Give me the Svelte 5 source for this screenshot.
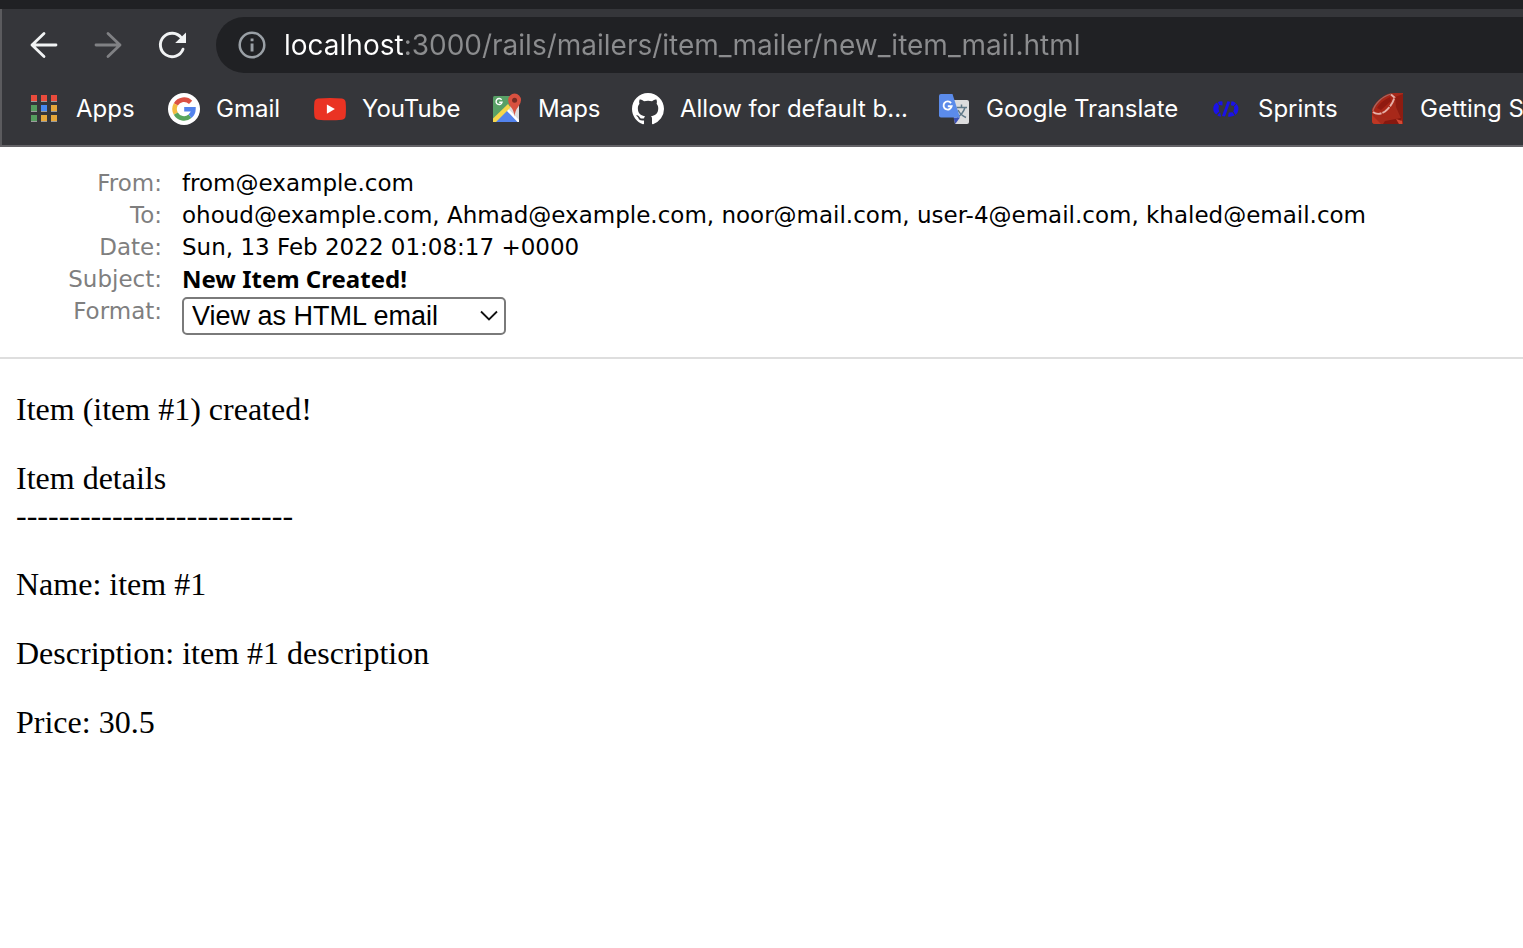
<script>
  const address = 'localhost:3000/rails/mailers/item_mailer/new_item_mail.html';

  const bookmarks = [
    { icon: 'apps', label: 'Apps', width: 140 },
    { icon: 'google', label: 'Gmail', width: 146 },
    { icon: 'youtube', label: 'YouTube', width: 176 },
    { icon: 'maps', label: 'Maps', width: 142 },
    { icon: 'github', label: 'Allow for default b...', width: 306 },
    { icon: 'translate', label: 'Google Translate', width: 272 },
    { icon: 'sprints', label: 'Sprints', width: 162 },
    { icon: 'ruby', label: 'Getting S', width: 160 }
  ];

  const appColors = ['#e94b3c', '#e94b3c', '#e94b3c', '#559d5f', '#4688f1', '#e6a73a', '#559d5f', '#e6a73a', '#e6a73a'];

  const headers = [
    { name: 'From:', value: 'from@example.com' },
    { name: 'To:', value: 'ohoud@example.com, Ahmad@example.com, noor@mail.com, user-4@email.com, khaled@email.com' },
    { name: 'Date:', value: 'Sun, 13 Feb 2022 01:08:17 +0000' },
    { name: 'Subject:', value: 'New Item Created!', strong: true }
  ];
</script>

<div class="chrome">
  <div class="toolbar">
    <button aria-label="Back">
      <svg viewBox="0 0 32 32"><path d="M28 16H4M16 4.500L4 16L16 27.500" fill="none" stroke="#f1f3f4" stroke-width="2.800" stroke-linecap="round" stroke-linejoin="round" /></svg>
    </button>
    <button aria-label="Forward" disabled>
      <svg viewBox="0 0 32 32"><path d="M4 16H28M16 4.500L28 16L16 27.500" fill="none" stroke="#808184" stroke-width="2.800" stroke-linecap="round" stroke-linejoin="round" /></svg>
    </button>
    <button aria-label="Reload">
      <svg viewBox="0 0 32 32"><path d="M27 20.200A11.700 11.700 0 1 1 25.500 9" fill="none" stroke="#f1f3f4" stroke-width="2.900" stroke-linecap="round" /><path d="M30 3.500V14H19.200Z" fill="#f1f3f4" /></svg>
    </button>
    <div class="omnibox">
      <svg viewBox="0 0 28 28" aria-hidden="true"><circle cx="14" cy="14" r="12.300" fill="none" stroke="#9aa0a6" stroke-width="2.500" /><path d="M12.600 7.400h2.900v2.800h-2.900zM12.600 12.400h2.900v8.200h-2.900z" fill="#9aa0a6" /></svg>
      <input type="text" aria-label="Address" value={address} spellcheck="false" />
    </div>
  </div>

  <nav class="bookmarks">
    {#each bookmarks as mark}
      <a href="#top" style="width: {mark.width}px">
        <svg viewBox="0 0 32 32" aria-hidden="true">
          {#if mark.icon === 'apps'}
            {#each appColors as color, i}
              <rect x={3 + (i % 3) * 10} y={2 + Math.floor(i / 3) * 10} width="6" height="6" fill={color} />
              <rect x={3 + (i % 3) * 10} y={8 + Math.floor(i / 3) * 10} width="6" height="1" fill="#9b9b9b" />
            {/each}
          {:else if mark.icon === 'google'}
            <circle cx="16" cy="16" r="16" fill="#fff" />
            <g fill="none" stroke-width="4.600">
              <path d="M7.800 11.400A9.400 9.400 0 0 1 22.600 9.300" stroke="#db5143" />
              <path d="M7.800 20.600A9.400 9.400 0 0 1 7.800 11.400" stroke="#f3bd42" />
              <path d="M22 23.300A9.400 9.400 0 0 1 7.800 20.600" stroke="#58a55d" />
              <path d="M16.200 16.200H25.400A9.400 9.400 0 0 1 22 23.300" stroke="#5383ec" />
            </g>
          {:else if mark.icon === 'youtube'}
            <path d="M4 5.500Q16 4.300 28 5.500Q31.300 6 31.600 9Q32.300 16 31.600 23Q31.300 26.200 28 26.700Q16 27.900 4 26.700Q.700 26.200 .400 23Q-.300 16 .400 9Q.700 6 4 5.500Z" fill="#ea3323" />
            <path d="M12.900 11.400V20.800L20.900 16.100Z" fill="#fff" />
          {:else if mark.icon === 'maps'}
            <rect x="3" y="3" width="26" height="26" rx="1.500" fill="#58a066" />
            <path d="M20 14L29 5V29H28L16 18Z" fill="#dcdcde" />
            <path d="M5 29L18 16L28 29Z" fill="#5383ec" />
            <path d="M17.500 15L29 27V29H27.500L16 17Z" fill="#fff" />
            <path d="M3 29V25.500L18 11L20.500 14.500L6 29Z" fill="#f6d64a" />
            <path d="M11.600 6.900A3 3 0 1 0 12 9.300H9.200" fill="none" stroke="#fff" stroke-width="1.400" />
            <path d="M24.500 23.500Q24 17.500 20.500 13.500Q18 10.200 18.200 7A6.400 6.400 0 0 1 31 7Q31 10.500 28.400 13.500Q25 17.500 24.500 23.500Z" fill="#d85140" />
            <circle cx="24.600" cy="7.300" r="2.500" fill="#772b23" />
          {:else if mark.icon === 'github'}
            <path transform="scale(2)" fill="#fff" d="M8 0C3.580 0 0 3.580 0 8c0 3.540 2.290 6.530 5.470 7.590.4.070.55-.17.55-.38 0-.19-.01-.82-.01-1.490-2.010.37-2.530-.49-2.690-.94-.09-.23-.48-.94-.82-1.130-.28-.15-.68-.52-.01-.53.63-.01 1.080.58 1.230.82.72 1.210 1.870.87 2.330.66.07-.52.28-.87.51-1.070-1.780-.2-3.640-.89-3.640-3.950 0-.87.31-1.590.82-2.150-.08-.2-.36-1.020.08-2.120 0 0 .67-.21 2.200.82.64-.18 1.320-.27 2-.27s1.360.09 2 .27c1.530-1.040 2.200-.82 2.200-.82.44 1.100.16 1.920.08 2.120.51.56.82 1.270.82 2.150 0 3.070-1.870 3.750-3.650 3.950.29.25.54.73.54 1.480 0 1.070-.01 1.930-.01 2.200 0 .21.15.46.55.38A8.010 8.010 0 0 0 16 8c0-4.420-3.580-8-8-8Z" />
          {:else if mark.icon === 'translate'}
            <path d="M13 7H29Q31 7 31 9V29Q31 31 29 31H17Z" fill="#dcdcdd" />
            <path d="M18.500 14.500H29M23.500 11.500V14.500M27 14.500Q25 21 19 24.500M20 17Q22.500 22 28 24.500" fill="none" stroke="#607988" stroke-width="1.500" />
            <path d="M15.500 24.500H22L17.200 31Z" fill="#3b50b5" />
            <path d="M3 1H14.500L22 24.500H3Q1 24.500 1 22.500V3Q1 1 3 1Z" fill="#5b8bea" />
            <path d="M13 10.100A4.100 4.100 0 1 0 13.700 13.200H9.800" fill="none" stroke="#fff" stroke-width="1.900" />
          {:else if mark.icon === 'sprints'}
            <g fill="#1a12e8">
              <path d="M8 9Q10 8 12.500 8.400V12.400L9 12Z" />
              <path d="M7 9.600L8.900 12.900Q7.900 16 9.300 18.400L6.200 21.600Q3 19 3.300 15Q3.600 11.400 7 9.600Z" />
              <path d="M7.200 22.300L10 19.300L11 23.500Q9 23.800 7.200 22.300Z" />
              <path d="M17.400 8.200L20.300 8.800L15 23.600L12 23Z" />
              <path d="M21.500 8.300Q24 8.300 26 10.200L23.500 13L20.800 12.200Z" />
              <path d="M26.600 10.800Q28.800 13.500 28.400 17Q28 20 25.500 22L23.300 18.600Q24.800 16 23.900 13.800Z" />
              <path d="M18.800 19.500L22.600 19.200L24.700 22.600Q21.500 24.200 18 23.500Z" />
            </g>
          {:else}
            <path d="M12 3Q16 0 23 0H31V31H3Q0 31 0 27V16Q4 8 12 3Z" fill="#a62a1b" />
            <path d="M23 4L31 1V30L24 14Z" fill="#8e1c11" />
            <path d="M20 13L30 29L8 23Z" fill="#a82819" />
            <path d="M0 22L9 31H3Q0 31 0 28Z" fill="#bd3724" />
            <path d="M13 28L29 25V31H11Z" fill="#85180f" />
            <path d="M24 26L30 28V31H27Z" fill="#d24a35" />
            <path d="M1.500 20Q0 16 6 9Q12 2 20 1L23.500 3.500Q22 9 16 16Q8 23 1.500 20Z" fill="#a82617" />
            <path d="M5 15Q9 8 18 4L19 8L9 17Z" fill="#901a10" />
            <path d="M1 19Q6 23 13 18.500Q20 13 22.500 4.500L19 1.500" fill="none" stroke="#e6b0a8" stroke-width="1.900" stroke-dasharray="9 1" />
            <path d="M1 18Q2 13 7 8Q12 3 19 1" fill="none" stroke="#a5665f" stroke-width="1.200" />
          {/if}
        </svg>
        <span>{mark.label}</span>
      </a>
    {/each}
  </nav>
</div>

<header class="message">
  <dl>
    {#each headers as row}
      <dt>{row.name}</dt>
      <dd class:strong={row.strong}>{row.value}</dd>
    {/each}
    <dt><label for="format">Format:</label></dt>
    <dd>
      <div class="select">
        <select id="format">
          <option>View as HTML email</option>
        </select>
        <svg viewBox="0 0 20 12" aria-hidden="true"><path d="M2 1.500L10 9.500L18 1.500" fill="none" stroke="#111" stroke-width="1.800" /></svg>
      </div>
    </dd>
  </dl>
</header>

<main>
  <p>Item (item #1) created!</p>
  <p>Item details<br />--------------------------</p>
  <p>Name: item #1</p>
  <p>Description: item #1 description</p>
  <p>Price: 30.5</p>
</main>

<style>
  :global(body) {
    margin: 0;
    background: #fff;
    overflow-x: hidden;
  }

  .chrome {
    overflow: hidden;
    background: #35363a;
    box-shadow: inset 2px 0 #5b5b5e;
    border-top: 9px solid #202124;
    border-bottom: 2px solid #646367;
    font-family: Inter, "Liberation Sans", sans-serif;
  }

  .toolbar {
    display: flex;
    align-items: center;
    gap: 32px;
    padding: 8px 0 8px 28px;
  }

  button {
    width: 32px;
    height: 32px;
    padding: 0;
    border: 0;
    background: none;
  }

  button svg {
    display: block;
  }

  .omnibox {
    flex: 1;
    display: flex;
    align-items: center;
    gap: 18px;
    margin-left: -4px;
    padding-left: 22px;
    height: 56px;
    border-radius: 28px 0 0 28px;
    background: #202124;
  }

  .omnibox svg {
    flex: none;
    width: 28px;
    height: 28px;
  }

  input {
    flex: 1;
    min-width: 0;
    height: 40px;
    padding: 0;
    border: 0;
    outline: 0;
    font: 400 28px/40px Inter, "Liberation Sans", sans-serif;
    color: transparent;
    background: linear-gradient(to right, #fff 120px, #8b8c8e 120px);
    background-clip: text;
  }

  .bookmarks {
    display: flex;
    padding: 8px 0 16px 28px;
    height: 40px;
  }

  .bookmarks a {
    flex: none;
    display: flex;
    align-items: center;
    gap: 16px;
    color: #fff;
    font-size: 24px;
    line-height: 32px;
    white-space: nowrap;
    text-decoration: none;
  }

  .bookmarks svg {
    flex: none;
    width: 32px;
    height: 32px;
  }

  .message {
    padding: 20px 0 22px;
    border-bottom: 2px solid #dedede;
    font: 23px/32px "DejaVu Sans", sans-serif;
    color: #000;
  }

  dl {
    display: grid;
    grid-template-columns: 162px 1fr;
    column-gap: 20px;
    margin: 0;
  }

  dt {
    text-align: right;
    color: #7f7f7f;
  }

  dd {
    margin: 0;
  }

  .strong {
    font: 700 24px/32px "Noto Sans", sans-serif;
  }

  .select {
    position: relative;
    width: 324px;
    margin-top: 2px;
  }

  select {
    display: block;
    appearance: none;
    width: 100%;
    height: 38px;
    padding: 0 8px;
    border: 2px solid #7a7a7a;
    border-radius: 5px;
    background: #fff;
    color: #000;
    font: 27px/34px "Liberation Sans", Arial, sans-serif;
  }

  .select svg {
    position: absolute;
    right: 7px;
    top: 13px;
    width: 20px;
    height: 12px;
    pointer-events: none;
  }

  main {
    padding: 0 16px;
    font: 32px/37px "Liberation Serif", "Times New Roman", serif;
    color: #000;
  }

  p {
    margin: 32px 0;
  }
</style>
